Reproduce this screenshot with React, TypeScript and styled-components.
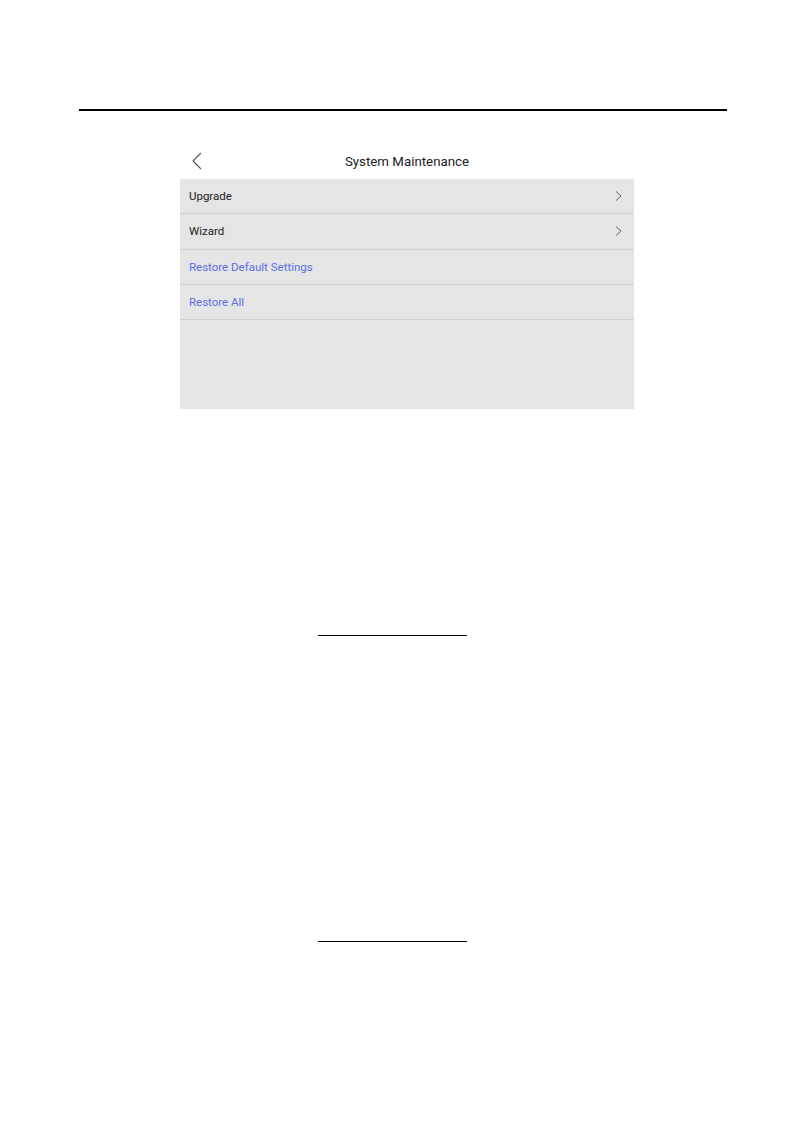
import React from "react";
import styled, { createGlobalStyle } from "styled-components";

const GlobalStyle = createGlobalStyle`
  html, body {
    margin: 0;
    padding: 0;
    background: #ffffff;
  }
  body {
    font-family: Roboto, "Liberation Sans", Arial, sans-serif;
  }
`;

interface MenuItem {
  label: string;
  action?: boolean;
  arrow?: boolean;
}

const items: MenuItem[] = [
  { label: "Upgrade", arrow: true },
  { label: "Wizard", arrow: true },
  { label: "Restore Default Settings", action: true },
  { label: "Restore All", action: true },
];

const BackIcon = () => (
  <svg width="12" height="18" viewBox="0 0 12 18" fill="none">
    <path d="M10 1 L2 9 L10 17" stroke="#555" strokeWidth="1.1" />
  </svg>
);

const ChevronIcon = () => (
  <svg width="7" height="10" viewBox="0 0 7 10" fill="none">
    <path d="M1 0.5 L6 5 L1 9.5" stroke="#666" strokeWidth="1" />
  </svg>
);

const App = () => {
  return (
    <Page>
      <GlobalStyle />
      <HeaderRule />
      <Figure>
        <TitleBar>
          <BackButton>
            <BackIcon />
          </BackButton>
          <Title>System Maintenance</Title>
        </TitleBar>
        <Panel>
          {items.map((item) => (
            <Row key={item.label}>
              <RowLabel $action={item.action}>{item.label}</RowLabel>
              {item.arrow && <ChevronIcon />}
            </Row>
          ))}
          <Filler />
        </Panel>
      </Figure>
      <BlankLine $gap={226} />
      <BlankLine $gap={305} />
    </Page>
  );
};

export default App;

const Page = styled.div`
  width: 794px;
  min-height: 1134px;
  padding-top: 109px;
  box-sizing: border-box;
  display: flex;
  flex-direction: column;
`;

const HeaderRule = styled.div`
  height: 2px;
  margin: 0 67px 0 79px;
  background: #000;
`;

const Figure = styled.div`
  width: 454px;
  margin: 32px 0 0 180px;
  display: flex;
  flex-direction: column;
`;

const TitleBar = styled.div`
  position: relative;
  height: 36px;
  display: flex;
  align-items: center;
  justify-content: center;
`;

const BackButton = styled.div`
  position: absolute;
  left: 11px;
  top: 9px;
  display: flex;
`;

const Title = styled.h2`
  margin: 0;
  font-size: 13.3px;
  font-weight: 400;
  color: #222;
`;

const Panel = styled.div`
  background: #e5e5e5;
  display: flex;
  flex-direction: column;
`;

const Row = styled.div`
  height: 35.3px;
  box-sizing: border-box;
  padding: 0 12px 0 9px;
  border-bottom: 1px solid #d2d2d2;
  display: flex;
  align-items: center;
  justify-content: space-between;
`;

const RowLabel = styled.span<{ $action?: boolean }>`
  font-size: 11.5px;
  color: ${({ $action }) => ($action ? "#5b6ee6" : "#222")};
`;

const Filler = styled.div`
  height: 88.8px;
`;

const BlankLine = styled.div<{ $gap: number }>`
  width: 149px;
  height: 1px;
  margin: ${({ $gap }) => $gap}px 0 0 318px;
  background: #000;
`;
